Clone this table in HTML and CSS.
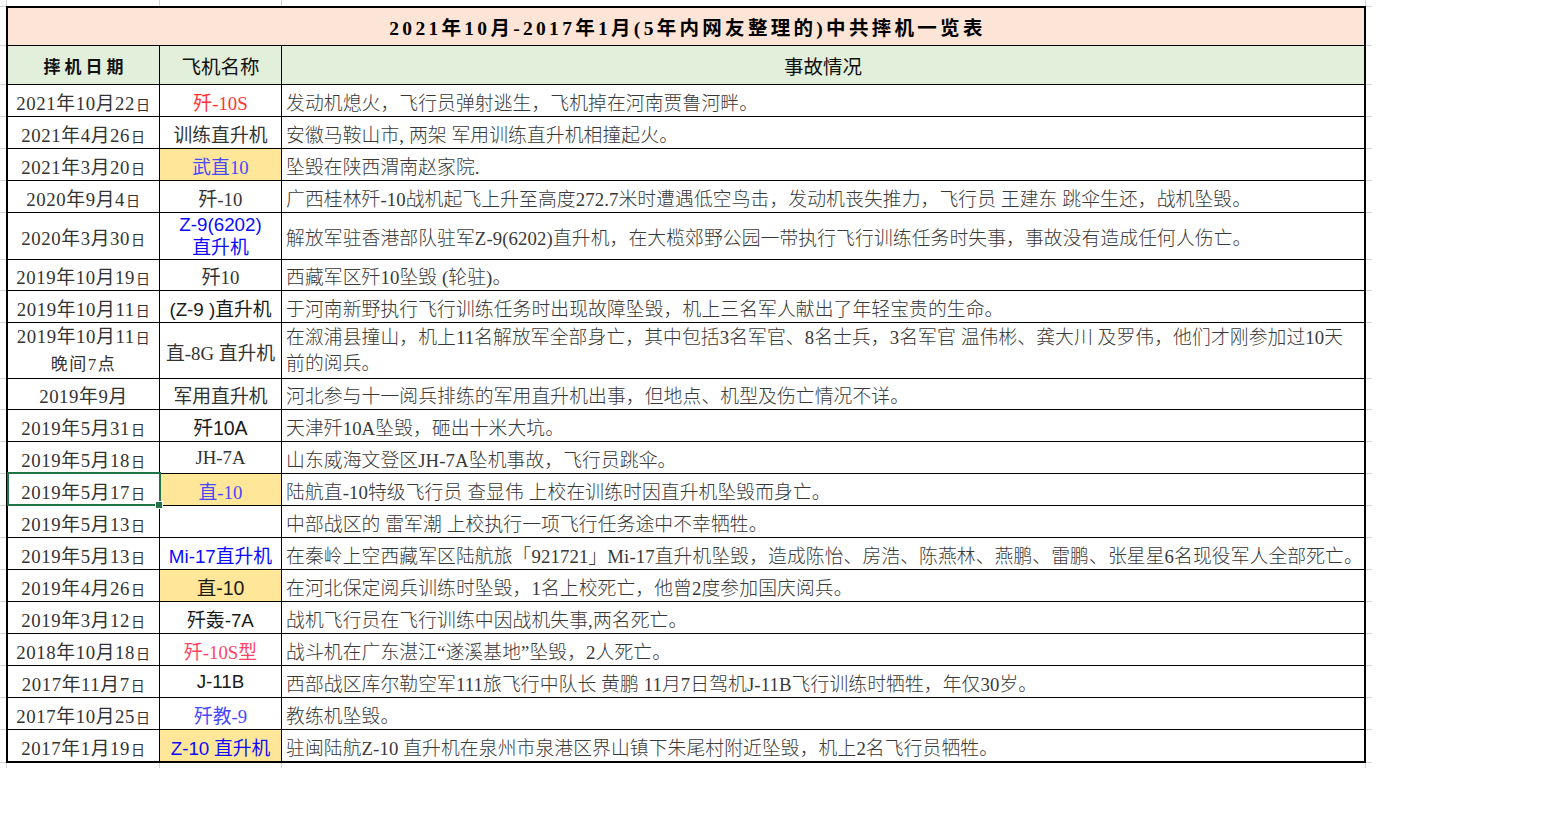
FILE: index.html
```html
<!DOCTYPE html>
<html lang="zh-CN">
<head>
<meta charset="utf-8">
<title>中共摔机一览表</title>
<link rel="stylesheet" href="styles.css">
</head>
<body>
<div class="sheet">
  <div class="row edge-top">
    <div></div><div class="stub stub-first"></div><div class="stub"></div><div class="stub"></div><div></div>
  </div>

  <div class="row title-row">
    <div class="g g-top"></div>
    <div class="title">2021年10月-2017年1月(5年内网友整理的)中共摔机一览表</div>
    <div class="g g-top"></div>
  </div>

  <div class="row head">
    <div class="g"></div>
    <div class="c c1 h-date">摔机日期</div>
    <div class="c c2 h-name">飞机名称</div>
    <div class="c c3 h-desc">事故情况</div>
    <div class="g"></div>
  </div>

  <div class="row">
    <div class="g"></div>
    <div class="c c1 date"><span>2021年10月22<span class="d">日</span></span></div>
    <div class="c c2 name red"><span>歼-10S</span></div>
    <div class="c c3 desc">发动机熄火，飞行员弹射逃生，飞机掉在河南贾鲁河畔。</div>
    <div class="g"></div>
  </div>

  <div class="row">
    <div class="g"></div>
    <div class="c c1 date"><span>2021年4月26<span class="d">日</span></span></div>
    <div class="c c2 name"><span>训练直升机</span></div>
    <div class="c c3 desc">安徽马鞍山市, 两架 军用训练直升机相撞起火。</div>
    <div class="g"></div>
  </div>

  <div class="row">
    <div class="g"></div>
    <div class="c c1 date"><span>2021年3月20<span class="d">日</span></span></div>
    <div class="c c2 name violet hl"><span>武直10</span></div>
    <div class="c c3 desc">坠毁在陕西渭南赵家院.</div>
    <div class="g"></div>
  </div>

  <div class="row">
    <div class="g"></div>
    <div class="c c1 date"><span>2020年9月4<span class="d">日</span></span></div>
    <div class="c c2 name"><span>歼-10</span></div>
    <div class="c c3 desc">广西桂林歼-10战机起飞上升至高度272.7米时遭遇低空鸟击，发动机丧失推力，飞行员 王建东 跳伞生还，战机坠毁。</div>
    <div class="g"></div>
  </div>

  <div class="row r46">
    <div class="g"></div>
    <div class="c c1 date"><span>2020年3月30<span class="d">日</span></span></div>
    <div class="c c2 name blue two"><span class="ar">Z-9(6202)</span><span>直升机</span></div>
    <div class="c c3 desc">解放军驻香港部队驻军Z-9(6202)直升机，在大榄郊野公园一带执行飞行训练任务时失事，事故没有造成任何人伤亡。</div>
    <div class="g"></div>
  </div>

  <div class="row">
    <div class="g"></div>
    <div class="c c1 date"><span>2019年10月19<span class="d">日</span></span></div>
    <div class="c c2 name"><span>歼10</span></div>
    <div class="c c3 desc">西藏军区歼10坠毁 (轮驻)。</div>
    <div class="g"></div>
  </div>

  <div class="row">
    <div class="g"></div>
    <div class="c c1 date"><span>2019年10月11<span class="d">日</span></span></div>
    <div class="c c2 name dark"><span><span class="ar">(Z-9 )</span>直升机</span></div>
    <div class="c c3 desc">于河南新野执行飞行训练任务时出现故障坠毁，机上三名军人献出了年轻宝贵的生命。</div>
    <div class="g"></div>
  </div>

  <div class="row r55">
    <div class="g"></div>
    <div class="c c1 date two"><span>2019年10月11<span class="d">日</span></span><span class="eve">晚间7点</span></div>
    <div class="c c2 name"><span>直-8G 直升机</span></div>
    <div class="c c3 desc wrap">在溆浦县撞山，机上11名解放军全部身亡，其中包括3名军官、8名士兵，3名军官 温伟彬、龚大川 及罗伟，他们才刚参加过10天<br>前的阅兵。</div>
    <div class="g"></div>
  </div>

  <div class="row">
    <div class="g"></div>
    <div class="c c1 date"><span>2019年9月</span></div>
    <div class="c c2 name"><span>军用直升机</span></div>
    <div class="c c3 desc">河北参与十一阅兵排练的军用直升机出事，但地点、机型及伤亡情况不详。</div>
    <div class="g"></div>
  </div>

  <div class="row">
    <div class="g"></div>
    <div class="c c1 date"><span>2019年5月31<span class="d">日</span></span></div>
    <div class="c c2 name dark big"><span>歼<span class="ar">10A</span></span></div>
    <div class="c c3 desc">天津歼10A坠毁，砸出十米大坑。</div>
    <div class="g"></div>
  </div>

  <div class="row">
    <div class="g"></div>
    <div class="c c1 date"><span>2019年5月18<span class="d">日</span></span></div>
    <div class="c c2 name"><span>JH-7A</span></div>
    <div class="c c3 desc">山东威海文登区JH-7A坠机事故，飞行员跳伞。</div>
    <div class="g"></div>
  </div>

  <div class="row">
    <div class="g"></div>
    <div class="c c1 date selected"><span>2019年5月17<span class="d">日</span></span></div>
    <div class="c c2 name violet hl"><span>直-10</span></div>
    <div class="c c3 desc">陆航直-10特级飞行员 查显伟 上校在训练时因直升机坠毁而身亡。</div>
    <div class="g"></div>
  </div>

  <div class="row">
    <div class="g"></div>
    <div class="c c1 date"><span>2019年5月13<span class="d">日</span></span></div>
    <div class="c c2 name"></div>
    <div class="c c3 desc">中部战区的 雷军潮 上校执行一项飞行任务途中不幸牺牲。</div>
    <div class="g"></div>
  </div>

  <div class="row">
    <div class="g"></div>
    <div class="c c1 date"><span>2019年5月13<span class="d">日</span></span></div>
    <div class="c c2 name blue"><span><span class="ar">Mi-17</span>直升机</span></div>
    <div class="c c3 desc">在秦岭上空西藏军区陆航旅「921721」Mi-17直升机坠毁，造成陈怡、房浩、陈燕林、燕鹏、雷鹏、张星星6名现役军人全部死亡。</div>
    <div class="g"></div>
  </div>

  <div class="row">
    <div class="g"></div>
    <div class="c c1 date"><span>2019年4月26<span class="d">日</span></span></div>
    <div class="c c2 name dark big hl"><span>直<span class="ar">-10</span></span></div>
    <div class="c c3 desc">在河北保定阅兵训练时坠毁，1名上校死亡，他曾2度参加国庆阅兵。</div>
    <div class="g"></div>
  </div>

  <div class="row">
    <div class="g"></div>
    <div class="c c1 date"><span>2019年3月12<span class="d">日</span></span></div>
    <div class="c c2 name dark"><span>歼轰<span class="ar">-7A</span></span></div>
    <div class="c c3 desc">战机飞行员在飞行训练中因战机失事,两名死亡。</div>
    <div class="g"></div>
  </div>

  <div class="row">
    <div class="g"></div>
    <div class="c c1 date"><span>2018年10月18<span class="d">日</span></span></div>
    <div class="c c2 name pink"><span>歼-10S型</span></div>
    <div class="c c3 desc">战斗机在广东湛江“遂溪基地”坠毁，2人死亡。</div>
    <div class="g"></div>
  </div>

  <div class="row">
    <div class="g"></div>
    <div class="c c1 date"><span>2017年11月7<span class="d">日</span></span></div>
    <div class="c c2 name dark"><span class="ar">J-11B</span></div>
    <div class="c c3 desc">西部战区库尔勒空军111旅飞行中队长 黄鹏 11月7日驾机J-11B飞行训练时牺牲，年仅30岁。</div>
    <div class="g"></div>
  </div>

  <div class="row">
    <div class="g"></div>
    <div class="c c1 date"><span>2017年10月25<span class="d">日</span></span></div>
    <div class="c c2 name violet"><span>歼教-9</span></div>
    <div class="c c3 desc">教练机坠毁。</div>
    <div class="g"></div>
  </div>

  <div class="row last">
    <div class="g"></div>
    <div class="c c1 date"><span>2017年1月19<span class="d">日</span></span></div>
    <div class="c c2 name blue hl"><span><span class="ar">Z-10</span> 直升机</span></div>
    <div class="c c3 desc">驻闽陆航Z-10 直升机在泉州市泉港区界山镇下朱尾村附近坠毁，机上2名飞行员牺牲。</div>
    <div class="g"></div>
  </div>

  <div class="row edge-bottom">
    <div></div><div class="stub stub-first"></div><div class="stub"></div><div class="stub"></div><div></div>
  </div>
</div>
</body>
</html>
```

FILE: styles.css
```css
* {
  box-sizing: border-box;
}

html, body {
  margin: 0;
  padding: 0;
  background: #ffffff;
}

body {
  font-family: "Liberation Serif", "Noto Sans CJK SC", serif;
  color: #333333;
}

.sheet {
  width: 1372px;
}

.row {
  display: grid;
  grid-template-columns: 6px 154px 122px 1084px 6px;
  height: 32px;
}

.edge-top {
  height: 6px;
}

.edge-bottom {
  height: 5px;
}

.stub {
  border-right: 1px solid #d4d4d4;
}

.stub-first {
  border-left: 1px solid #d4d4d4;
}

.title-row {
  height: 40px;
}

.head {
  height: 39px;
}

.r46 {
  height: 46px;
}

.r55 {
  height: 55px;
}

.last {
  height: 33px;
}

.g {
  border-bottom: 1px solid #d4d4d4;
}

.g-top {
  border-top: 1px solid #d4d4d4;
}

.title {
  grid-column: 2 / 5;
  background: #fce4d6;
  border: 2px solid #000;
  border-bottom-width: 1px;
  display: flex;
  align-items: center;
  justify-content: center;
  font-weight: bold;
  font-size: 19.5px;
  letter-spacing: 3.3px;
  color: #000;
  padding-left: 3px;
}

.c {
  border-right: 1px solid #000;
  border-bottom: 1px solid #000;
  display: flex;
  align-items: center;
  justify-content: center;
  white-space: nowrap;
  font-size: 18.8px;
  padding-top: 1px;
}

.c1 {
  border-left: 2px solid #000;
}

.c3 {
  border-right-width: 2px;
  justify-content: flex-start;
  padding-left: 4px;
}

.last .c {
  border-bottom-width: 2px;
}

.head .c {
  background: #e2efda;
  color: #111;
}

.h-date {
  font-weight: bold;
  font-size: 17px;
  letter-spacing: 4px;
  padding-left: 4px;
}

.h-name {
  font-size: 19.5px;
}

.h-desc {
  font-size: 19.5px;
  justify-content: center;
  padding-left: 0;
}

.date {
  letter-spacing: 0.6px;
  color: #333;
}

.d {
  font-size: 14px;
  margin-left: 1px;
}

.two {
  flex-direction: column;
  line-height: 23px;
  padding-top: 0;
}

.date.two {
  line-height: 26px;
  padding-top: 1px;
}

.eve {
  font-size: 17px;
  letter-spacing: 1.5px;
}

.desc {
  color: #383838;
  font-weight: 300;
  letter-spacing: 0.1px;
}

.wrap {
  white-space: normal;
  align-items: center;
  line-height: 26px;
  padding-top: 0;
}

.name {
  color: #333;
}

.ar {
  font-family: "Liberation Sans", "Noto Sans CJK SC", sans-serif;
}

.big {
  font-size: 19.5px;
}

.dark {
  color: #1a1a1a;
}

.red {
  color: #ff3333;
}

.pink {
  color: #ff4466;
}

.blue {
  color: #0a0aff;
}

.violet {
  color: #4848ff;
}

.hl {
  background: #ffe699;
}

.selected {
  position: relative;
}

.selected::after {
  content: "";
  position: absolute;
  top: -2px;
  left: -1px;
  right: -2px;
  bottom: -1px;
  border: 2px solid #217346;
  pointer-events: none;
}

.selected::before {
  content: "";
  position: absolute;
  right: -4px;
  bottom: -4px;
  width: 6px;
  height: 6px;
  background: #217346;
  border: 1px solid #fff;
  z-index: 2;
}
```
